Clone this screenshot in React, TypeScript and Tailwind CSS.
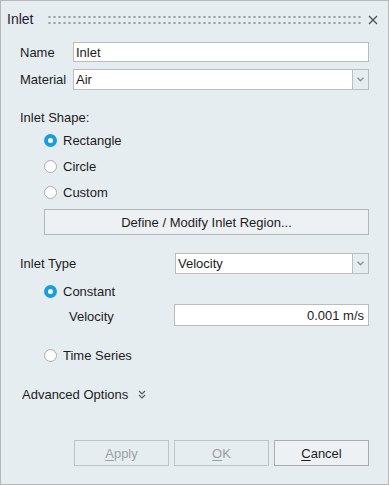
const Radio = ({ checked, label }: { checked?: boolean; label: string }) => (
  <div className="flex h-[26px] items-center">
    {checked ? (
      <span className="flex h-[13px] w-[13px] items-center justify-center rounded-full bg-[#1a9de0]">
        <span className="h-[5px] w-[5px] rounded-full bg-white" />
      </span>
    ) : (
      <span className="h-[13px] w-[13px] rounded-full border border-[#a9adb0] bg-white" />
    )}
    <span className="ml-[6px]">{label}</span>
  </div>
);

const Combo = ({ value, className }: { value: string; className?: string }) => (
  <div className={`flex h-[21px] ${className ?? ""}`}>
    <div className="flex flex-1 items-center border border-[#b9bdc0] bg-white pl-[2px]">{value}</div>
    <div className="flex w-[16px] items-center justify-center border border-l-0 border-[#b9bdc0]">
      <svg width="7" height="5" viewBox="0 0 7 5">
        <path d="M0.5 0.8 L3.5 3.8 L6.5 0.8" fill="none" stroke="#8a8f93" strokeWidth="1.3" />
      </svg>
    </div>
  </div>
);

export default function App() {
  return (
    <div className="flex h-[485px] w-[389px] flex-col border border-[#b4b8bb] bg-[#e6edf1] font-['Liberation_Sans',Arial,sans-serif] text-[13px] leading-[15px] text-[#1c1c1c]">
      <div className="flex h-[37px] items-center pl-[6px] pr-[10px]">
        <span className="text-[14px] text-[#1f2130]">Inlet</span>
        <div className="ml-[14px] h-[12px] flex-1 bg-[radial-gradient(circle,#9a9fa3_1px,transparent_1.3px)] bg-[length:5px_6px]" />
        <svg className="ml-[5px]" width="10" height="10" viewBox="0 0 10 10">
          <path d="M1 1 L9 9 M9 1 L1 9" stroke="#4a4d50" strokeWidth="1.2" />
        </svg>
      </div>

      <div className="flex flex-col pl-[19px] pr-[19px]">
        <div className="mt-[4px] flex h-[20px] items-center">
          <span className="w-[53px]">Name</span>
          <div className="flex h-full flex-1 items-center border border-[#b9bdc0] bg-white pl-[2px]">Inlet</div>
        </div>
        <div className="mt-[7px] flex items-center">
          <span className="w-[53px]">Material</span>
          <Combo value="Air" className="flex-1" />
        </div>

        <div className="mt-[20px] h-[16px]">Inlet Shape:</div>
        <div className="flex flex-col pl-[24px]">
          <div className="mt-[1px]">
            <Radio checked label="Rectangle" />
            <Radio label="Circle" />
            <Radio label="Custom" />
          </div>
          <button className="mt-[4px] h-[26px] border border-[#b3b7ba] bg-[#edf1f4] text-center">
            Define / Modify Inlet Region...
          </button>
        </div>

        <div className="mt-[18px] flex items-center">
          <span className="w-[155px]">Inlet Type</span>
          <Combo value="Velocity" className="flex-1" />
        </div>
        <div className="pl-[24px]">
          <div className="mt-[4px]">
            <Radio checked label="Constant" />
          </div>
          <div className="flex h-[22px] items-center">
            <span className="w-[130px] pl-[25px] pt-[3px]">Velocity</span>
            <div className="flex h-full flex-1 items-center justify-end border border-[#b9bdc0] bg-white pr-[4px]">
              0.001 m/s
            </div>
          </div>
          <div className="mt-[16px]">
            <Radio label="Time Series" />
          </div>
        </div>

        <div className="mt-[18px] flex h-[16px] items-center pl-[2px]">
          <span>Advanced Options</span>
          <svg className="ml-[10px]" width="8" height="9" viewBox="0 0 8 9">
            <path d="M1 1 L4 4 L7 1 M1 5 L4 8 L7 5" fill="none" stroke="#55595c" strokeWidth="1.1" />
          </svg>
        </div>

        <div className="mt-[38px] flex justify-end gap-[5px]">
          <button className="h-[26px] w-[95px] border border-[#bfc3c6] text-[#9ba0a4]">
            <span className="underline underline-offset-2">A</span>pply
          </button>
          <button className="h-[26px] w-[95px] border border-[#bfc3c6] text-[#9ba0a4]">
            <span className="underline underline-offset-2">O</span>K
          </button>
          <button className="h-[26px] w-[95px] border border-[#a9adb0] bg-[#edf1f4]">
            <span className="underline underline-offset-2">C</span>ancel
          </button>
        </div>
      </div>
    </div>
  );
}
